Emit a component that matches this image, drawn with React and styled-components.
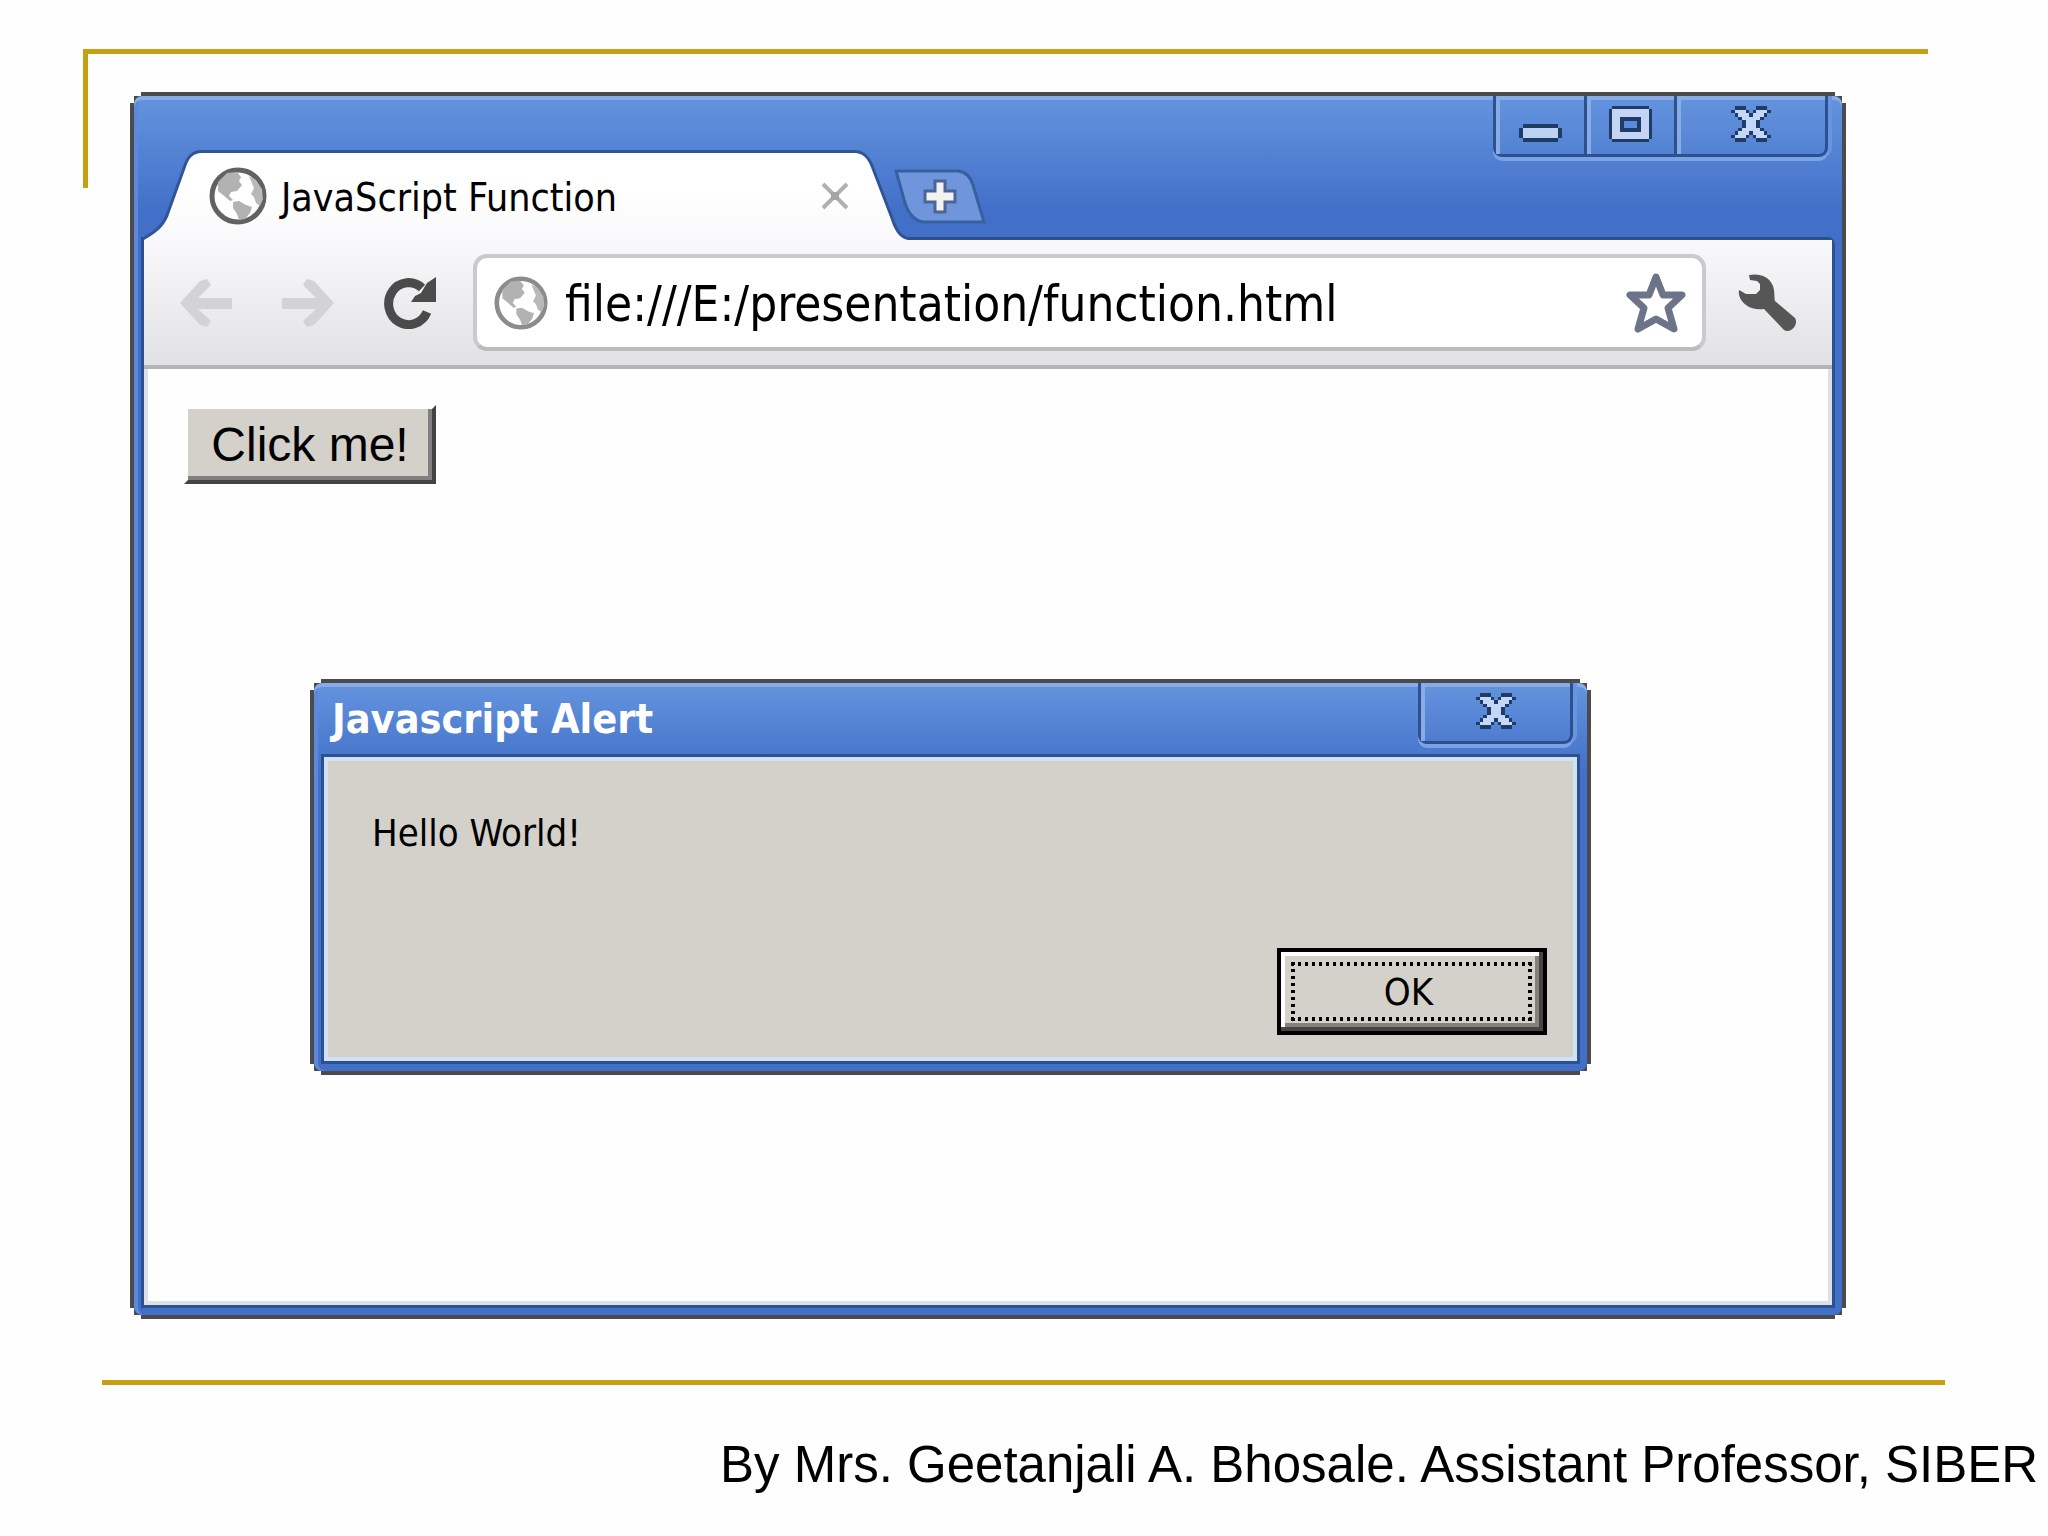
import React, { useState } from "react";
import styled, { createGlobalStyle } from "styled-components";

const GlobalStyle = createGlobalStyle`
* {
  box-sizing: border-box;
}
body {
  margin: 0;
  background: #fefefe;
  color: #000;
  overflow-x: hidden;
}
button, input {
  margin: 0;
  padding: 0;
  border: 0;
  background: none;
  color: inherit;
  font: inherit;
}
svg {
  display: block;
  flex: none;
}
`;

const uiFont = `"DejaVu Sans Condensed", "Noto Sans", sans-serif`;

const Slide = styled.div`
display: flex;
flex-direction: column;
min-height: 100vh;
padding-top: 49px;
overflow: hidden;
font-family: "Liberation Sans", Arial, sans-serif;
`;

const Stage = styled.main`
flex: 1;
display: grid;
margin: 0 120px 0 83px;
`;

const Bracket = styled.div`
grid-area: 1 / 1;
height: 139px;
border-top: 5px solid #c79f12;
border-left: 5px solid #c79f12;
`;

const Footer = styled.footer`
height: 156px;
`;

const Rule = styled.hr`
height: 5px;
margin: 0 103px 0 102px;
border: 0;
background: #c79f12;
`;

const Credit = styled.p`
margin: 50px 0 0 720px;
font-size: 51px;
line-height: 60px;
white-space: nowrap;
`;

/* the corners are cut in two square steps */
const Frame = styled.section`
display: flex;
flex-direction: column;
padding: 0 10px 10px;
border: 4px solid #4b4b4b;
border-radius: 12px;
background: linear-gradient(#6494de, #4270c9 ${props => props.$fade}) #4270c9;
box-shadow: inset 0 4px 0 #88ace6, inset 4px 0 0 #5d88dc;
clip-path: polygon(
  0 11px, 4px 11px, 4px 4px, 11px 4px, 11px 0,
  calc(100% - 11px) 0, calc(100% - 11px) 4px, calc(100% - 4px) 4px, calc(100% - 4px) 11px, 100% 11px,
  100% calc(100% - 11px), calc(100% - 4px) calc(100% - 11px), calc(100% - 4px) calc(100% - 4px),
  calc(100% - 11px) calc(100% - 4px), calc(100% - 11px) 100%,
  11px 100%, 11px calc(100% - 4px), 4px calc(100% - 4px), 4px calc(100% - 11px), 0 calc(100% - 11px)
);
`;

const Browser = styled(Frame)`
grid-area: 1 / 1;
margin: 43px 82px 61px 47px;
`;

const TabStrip = styled.div`
display: flex;
align-items: flex-end;
height: 144px;
`;

const Tab = styled.div`
position: relative;
z-index: 1;
display: flex;
flex: 0 1 764px;
height: 87px;
clip-path: inset(-4px 0 0 0);
`;

const TabBody = styled.div`
flex: 1;
display: flex;
align-items: center;
padding: 0 7px 2px 7px;
background: linear-gradient(#fff 40%, #f9f9fb);
box-shadow: 0 -3px 0 #2f5597;
`;

const TabTitle = styled.span`
flex: 1;
padding: 4px 0 0 14px;
font: 39px/44px ${uiFont};
white-space: nowrap;
`;

const IconButton = styled.button`
display: flex;
flex: none;
`;

const NewTab = styled(IconButton)`
margin: 0 0 16px -14px;
position: relative;
z-index: 1;
`;

const Controls = styled.div`
display: flex;
align-self: flex-start;
height: 61px;
margin: 0 4px 0 auto;
border: 3px solid #2b5190;
border-top: 0;
border-radius: 0 0 9px 9px;
box-shadow: 0 4px 0 #7ba3e4, 4px 0 0 #6b94de;
`;

const ControlButton = styled.button`
display: flex;
justify-content: center;
width: ${props => props.$width}px;
padding-top: ${props => props.$top || 10}px;
box-shadow: inset 4px 4px 0 #88ace6;

& + & {
  border-left: 3px solid #2b5190;
}
`;

const Client = styled.div`
flex: 1;
display: flex;
flex-direction: column;
border-radius: 0 4px 0 0;
background: #f9f9fb;
box-shadow: 0 0 0 3px #2b5190;
`;

const Toolbar = styled.div`
display: flex;
align-items: center;
height: 129px;
padding: 0 34px 0 36px;
border-bottom: 4px solid #b4b5b7;
background: linear-gradient(#f9f9fb, #e1e1e4);
`;

const NavButton = styled(IconButton)`
margin-right: ${props => props.$gap}px;
`;

const Omnibox = styled.div`
flex: 1;
display: flex;
align-items: center;
height: 97px;
padding: 0 16px 0 17px;
border: 4px solid #c9cacd;
border-bottom-color: #bbbcbe;
border-radius: 14px;
background: #fff;
`;

const Address = styled.input`
flex: 1;
min-width: 0;
height: 72px;
padding: 4px 0 0 17px;
font: 49px/60px ${uiFont};
outline: none;
`;

const MenuButton = styled(IconButton)`
margin-left: 32px;
`;

const Page = styled.div`
position: relative;
flex: 1;
min-height: 720px;
padding: 36px;
border: solid #dfe0e5;
border-width: 0 4px 4px;
background: #fefefe;
`;

const ClickButton = styled.button`
width: 252px;
height: 79px;
border: 4px solid;
border-color: #fefefe #434343 #434343 #fefefe;
background: #d4d0ca;
box-shadow: inset -4px -4px 0 #808080;
font: 48px/60px "Liberation Sans", Arial, sans-serif;
`;

const Dialog = styled(Frame)`
position: absolute;
top: 310px;
left: 162px;
right: 237px;
`;

const TitleBar = styled.header`
display: flex;
align-items: flex-start;
height: 74px;
`;

const DialogTitle = styled.h1`
flex: 1;
margin: 0;
padding: 14px 0 0 8px;
color: #fff;
font: bold 41px/44px ${uiFont};
`;

const DialogBody = styled.div`
display: flex;
flex-direction: column;
justify-content: space-between;
height: 304px;
padding: 50px 26px 22px 44px;
border: 4px solid #cfe1f6;
background: #d4d0ca;
box-shadow: 0 0 0 3px #2b5190;
`;

const Message = styled.p`
margin: 0;
font: 38px/44px ${uiFont};
`;

const OkButton = styled.button`
align-self: flex-end;
width: 270px;
height: 87px;
padding: 7px;
border: 4px solid #000;
background: #d4d0ca;
box-shadow: inset -4px -4px 0 #484642, inset 4px 4px 0 #fff, inset -8px -8px 0 #84827e;
`;

/* dotted keyboard focus rectangle */
const dots = direction => `repeating-linear-gradient(to ${direction}, #000 0 3px, transparent 3px 7px)`;

const FocusRing = styled.span`
display: flex;
align-items: center;
justify-content: center;
width: 241px;
height: 59px;
margin-left: 3px;
padding-right: 6px;
background:
  ${dots("right")} top / 100% 4px no-repeat,
  ${dots("right")} bottom / 100% 4px no-repeat,
  ${dots("bottom")} left / 4px 100% no-repeat,
  ${dots("bottom")} right / 4px 100% no-repeat;
font: 38px/44px ${uiFont};
`;

const closePixels = [
  ".DDD...DDD.",
  "DLLLD.DLLLD",
  ".DLLLDLLLD.",
  "..DLLLLLD..",
  "...DLLLD...",
  "...DLLLD...",
  "..DLLLLLD..",
  ".DLLLDLLLD.",
  "DLLLD.DLLLD",
  ".DDD...DDD.",
];

const CloseGlyph = () => (
  <svg width="40" height="36" viewBox="0 0 11 10" preserveAspectRatio="none" shapeRendering="crispEdges">
    {closePixels.map((row, y) =>
      row.split("").map((cell, x) =>
        cell !== "." && (
          <rect key={`${x}-${y}`} x={x} y={y} width="1" height="1" fill={cell === "D" ? "#1f3c66" : "#c3d8f6"} />
        )
      )
    )}
  </svg>
);

const MinimizeGlyph = () => (
  <svg width="43" height="18" viewBox="0 0 43 18">
    <path d="M4 0H39V4H43V14H39V18H4V14H0V4H4Z" fill="#1f3c66" />
    <path d="M4 4H39V14H4Z" fill="#bdd2f3" />
  </svg>
);

const MaximizeGlyph = () => (
  <svg width="43" height="36" viewBox="0 0 43 36">
    <path d="M3 0H40V3H43V33H40V36H3V33H0V3H3Z" fill="#1f3c66" />
    <path d="M3 3H40V33H3Z" fill="#c3d4f5" />
    <path d="M11 11H32V26H11Z" fill="#1f3c66" />
    <path d="M15 15H28V22H15Z" fill="#5d8adb" />
  </svg>
);

const Globe = ({ size, ring }) => (
  <svg width={size} height={size} viewBox="0 0 58 58">
    <circle cx="29" cy="29" r="26" fill="#fff" stroke={ring} strokeWidth="5" />
    <path d="M9 15L18 6L28 5L32 10L30 14L33 18L28 24L22 25L20 29L24 33L21 34L14 28L9 24Z" fill="#b2b2b2" />
    <path d="M24 35L30 34L37 38L43 40L41 46L36 52L30 53L28 47L24 41Z" fill="#b2b2b2" />
    <path d="M40 9L47 13L53 22L54 32L51 39L47 36L45 30L42 27L45 21Z" fill="#b9b9b9" />
  </svg>
);

const TabFill = ({ id }) => (
  <linearGradient id={id} gradientUnits="userSpaceOnUse" x1="0" y1="0" x2="0" y2="87">
    <stop offset="40%" stopColor="#fff" />
    <stop offset="100%" stopColor="#f9f9fb" />
  </linearGradient>
);

const TabLeft = () => (
  <svg width="58" height="87" viewBox="0 0 58 87" overflow="visible">
    <TabFill id="tab-left" />
    <path d="M0 87C12 80 19 75 24 64L42 14C45 5 49 0 58 0" fill="none" stroke="#2f5597" strokeWidth="6" />
    <path d="M0 87C12 80 19 75 24 64L42 14C45 5 49 0 58 0H59V87Z" fill="url(#tab-left)" />
  </svg>
);

const TabRight = () => (
  <svg width="52" height="87" viewBox="0 0 52 87" overflow="visible">
    <TabFill id="tab-right" />
    <path d="M0 0C9 1 13 8 16 17L34 64C38 76 42 85 52 87" fill="none" stroke="#2f5597" strokeWidth="6" />
    <path d="M-1 0H0C9 1 13 8 16 17L34 64C38 76 42 85 52 87H-1Z" fill="url(#tab-right)" />
  </svg>
);

const TabClose = () => (
  <svg width="28" height="28" viewBox="0 0 28 28">
    <path d="M2 2L26 26M26 2L2 26" stroke="#b0b0b0" strokeWidth="4" />
    <path d="M10 10H18V18H10Z" fill="#a4a4a4" />
  </svg>
);

const NewTabShape = () => (
  <svg width="92" height="55" viewBox="0 0 92 55">
    <path d="M2 2H64C73 3 77 9 79 16L90 53H30C20 52 14 43 11 34Z" fill="#6f96dc" stroke="#38609f" strokeWidth="3" />
    <path d="M41 12H51V22H61V33H51V43H41V33H31V22H41Z" fill="#f2f2f0" stroke="#4a6596" strokeWidth="3" />
  </svg>
);

const Arrow = ({ flip }) => (
  <svg width="52" height="48" viewBox="0 0 52 48">
    <path
      d="M0 24L20 2L27 0L31 6L18 19H52V30H18L31 42L27 48L20 46Z"
      fill="#d3d3d5"
      transform={flip ? "translate(52 0) scale(-1 1)" : undefined}
    />
  </svg>
);

const Reload = () => (
  <svg width="54" height="52" viewBox="0 0 54 52">
    <path d="M45 35A20 21 0 1 1 40 11" fill="none" stroke="#4b4b4b" strokeWidth="9" />
    <path d="M54 0V25H29L33 19L39 16L45 6Z" fill="#4b4b4b" />
  </svg>
);

const Star = () => (
  <svg width="60" height="60" viewBox="0 0 60 60">
    <path
      d="M30 4L37 22H56L42 35L48 56L30 46L12 56L18 35L4 22H23Z"
      fill="#fff" stroke="#6d7489" strokeWidth="7" strokeLinejoin="round"
    />
  </svg>
);

const Wrench = () => (
  <svg width="60" height="58" viewBox="0 0 60 58">
    <path
      d="M11 1C21 -1 31 2 35 12C37 18 36 24 37 27L57 44C61 50 53 60 46 56L26 35C20 36 13 35 8 31C3 27 0 22 1 16L8 20H18L22 16V10L19 7L12 6Z"
      fill="#565656"
    />
  </svg>
);

const App = () => {
  const [address, setAddress] = useState("file:///E:/presentation/function.html");
  const [open, setOpen] = useState(true);

  return (
    <Slide>
      <GlobalStyle />
      <Stage>
        <Bracket />
        <Browser $fade="115px">
          <TabStrip>
            <Tab>
              <TabLeft />
              <TabBody>
                <Globe size={58} ring="#626262" />
                <TabTitle>JavaScript Function</TabTitle>
                <IconButton aria-label="Close tab"><TabClose /></IconButton>
              </TabBody>
              <TabRight />
            </Tab>
            <NewTab aria-label="New tab"><NewTabShape /></NewTab>
            <Controls>
              <ControlButton $width={88} $top={28} aria-label="Minimize"><MinimizeGlyph /></ControlButton>
              <ControlButton $width={90} aria-label="Maximize"><MaximizeGlyph /></ControlButton>
              <ControlButton $width={151} aria-label="Close"><CloseGlyph /></ControlButton>
            </Controls>
          </TabStrip>

          <Client>
            <Toolbar>
              <NavButton $gap={50} aria-label="Back"><Arrow /></NavButton>
              <NavButton $gap={48} aria-label="Forward"><Arrow flip /></NavButton>
              <NavButton $gap={37} aria-label="Reload"><Reload /></NavButton>
              <Omnibox>
                <Globe size={54} ring="#8c8c8c" />
                <Address
                  type="text"
                  aria-label="Address"
                  value={address}
                  onChange={(e) => setAddress(e.target.value)}
                />
                <IconButton aria-label="Bookmark this page"><Star /></IconButton>
              </Omnibox>
              <MenuButton aria-label="Settings"><Wrench /></MenuButton>
            </Toolbar>

            <Page>
              <ClickButton onClick={() => setOpen(true)}>Click me!</ClickButton>
              {open &&
                <Dialog $fade="90px" role="alertdialog" aria-labelledby="alert-title">
                  <TitleBar>
                    <DialogTitle id="alert-title">Javascript Alert</DialogTitle>
                    <Controls>
                      <ControlButton $width={149} aria-label="Close alert" onClick={() => setOpen(false)}>
                        <CloseGlyph />
                      </ControlButton>
                    </Controls>
                  </TitleBar>
                  <DialogBody>
                    <Message>Hello World!</Message>
                    <OkButton onClick={() => setOpen(false)}>
                      <FocusRing>OK</FocusRing>
                    </OkButton>
                  </DialogBody>
                </Dialog>
              }
            </Page>
          </Client>
        </Browser>
      </Stage>
      <Footer>
        <Rule />
        <Credit>By Mrs. Geetanjali A. Bhosale. Assistant Professor, SIBER</Credit>
      </Footer>
    </Slide>
  );
};

export default App;
